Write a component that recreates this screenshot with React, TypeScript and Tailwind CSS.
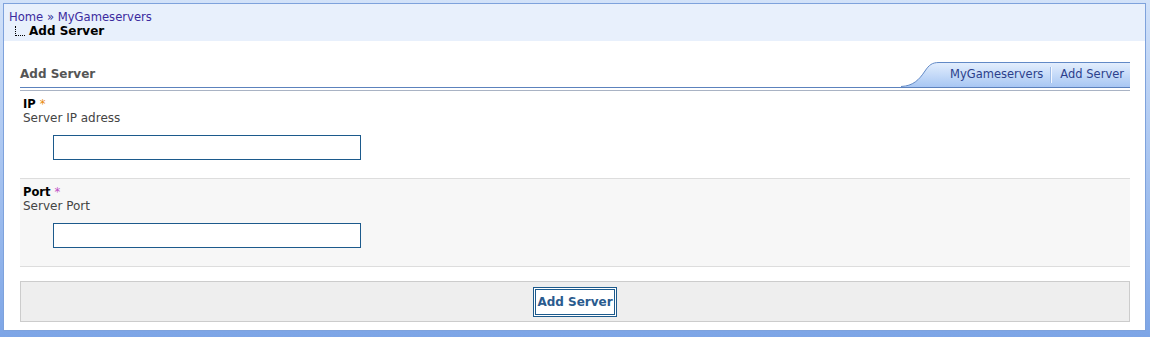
import React from "react";

const font = "font-['Verdana','DejaVu_Sans',sans-serif]";

const FormRow = ({
  label,
  hint,
  star,
  shaded,
}: {
  label: string;
  hint: string;
  star: string;
  shaded?: boolean;
}) => {
  return (
    <div
      className={`flex h-[88px] flex-col border-b border-[#dddddd] pl-[3px] pt-[7px] ${
        shaded ? "bg-[#f7f7f7]" : "bg-white"
      }`}
    >
      <div className="text-[11.5px] leading-[13px] font-bold text-black">
        {label} <span className={`font-normal ${star}`}>*</span>
      </div>
      <div className="text-[12px] leading-[14px] text-[#444444]">{hint}</div>
      <input
        type="text"
        className="mt-[10px] ml-[30px] h-[25px] w-[308px] border border-[#1c5a8c] bg-white outline-none"
      />
    </div>
  );
};

const App = () => {
  return (
    <div
      className={`${font} h-[337px] w-[1150px] bg-gradient-to-b from-[#d2e2f9] to-[#7da5e6] pt-[3px] pr-[4px] pb-[6px] pl-[3px]`}
    >
      <div className="flex h-full flex-col border border-[#7ea2dc] bg-white">
        {/* breadcrumb header */}
        <div className="h-[37px] bg-[#e8f0fc] pt-[6px] pl-[5px]">
          <div className="text-[11.6px] leading-[14px] text-[#3b2a9e]">
            <span>Home</span> <span className="text-[#333399]">»</span>{" "}
            <span>MyGameservers</span>
          </div>
          <div className="flex items-end">
            <span className="mb-[3px] ml-[6px] mr-[4px] h-[10px] w-[10px] border-b border-l border-dotted border-black" />
            <span className="text-[12px] leading-[15px] font-bold text-black">
              Add Server
            </span>
          </div>
        </div>

        <div className="flex flex-1 flex-col pt-[20px] pr-[15px] pl-[16px]">
          {/* section title + tabs */}
          <div className="flex h-[26px] items-end justify-between">
            <div className="pb-[5px] text-[12px] leading-[15px] font-bold text-[#555555]">
              Add Server
            </div>
            <div className="flex h-[25px] items-stretch">
              <svg width="38" height="25" viewBox="0 0 38 25" className="block">
                <defs>
                  <linearGradient id="tabg" x1="0" y1="0" x2="0" y2="1">
                    <stop offset="0" stopColor="#e3eefd" />
                    <stop offset="1" stopColor="#a8c7f3" />
                  </linearGradient>
                </defs>
                <path
                  d="M0 25 C 12 24, 18 18, 24 9 C 28 3, 31 0.5, 38 0.5 L 38 25 Z"
                  fill="url(#tabg)"
                />
                <path
                  d="M0 24.5 C 12 24, 18 18, 24 9 C 28 3, 31 0.5, 38 0.5"
                  fill="none"
                  stroke="#6189c6"
                  strokeWidth="1"
                />
              </svg>
              <div className="flex items-center border-t border-[#6189c6] bg-gradient-to-b from-[#e3eefd] to-[#a8c7f3] pr-[6px] pl-[11px] text-[11.5px] text-[#2c3f8c]">
                <span>MyGameservers</span>
                <span className="mx-[8px] h-[16px] w-px bg-[#f4f8ff] shadow-[-1px_0_0_#9dbbe6]" />
                <span>Add Server</span>
              </div>
            </div>
          </div>
          <div className="h-px bg-[#5c82bd]" />
          <div className="mt-[2px] h-px bg-[#a9b3c4]" />

          <FormRow label="IP" hint="Server IP adress" star="text-[#e8890c]" />
          <FormRow
            label="Port"
            hint="Server Port"
            star="text-[#c04fc4]"
            shaded
          />

          {/* submit bar */}
          <div className="mt-[14px] flex h-[41px] justify-center border border-[#cccccc] bg-[#eeeeee] pt-[5px]">
            <button className="h-[30px] w-[84px] border-[3px] border-double border-[#1c5a8c] bg-white text-[12px] font-bold text-[#2a5b8e]">
              Add Server
            </button>
          </div>
        </div>
      </div>
    </div>
  );
};

export default App;
